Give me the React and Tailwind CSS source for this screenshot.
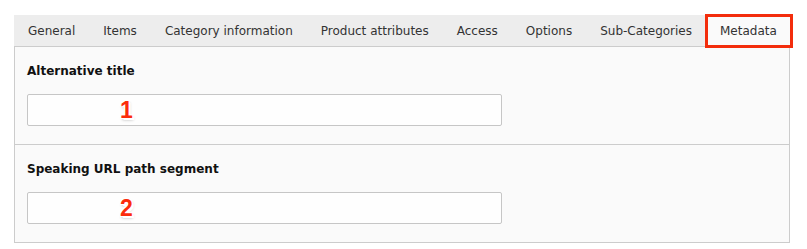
import React from 'react';

const tabs = [
  'General',
  'Items',
  'Category information',
  'Product attributes',
  'Access',
  'Options',
  'Sub-Categories',
];

const badgeShadow = {
  textShadow:
    '1px 0 0 #fff, -1px 0 0 #fff, 0 1px 0 #fff, 0 -1px 0 #fff, 1px 1px 0 #fff, -1px -1px 0 #fff, 1px -1px 0 #fff, -1px 1px 0 #fff, 2px 2px 0 #fff, 1px 2px 3px rgba(0,0,0,0.3)',
};

const Field = ({ label, number, last }) => (
  <div className={`px-[12px] pt-[16px] pb-[18px] ${last ? '' : 'border-b border-[#cccccc]'}`}>
    <div className="text-[12px] leading-[16px] font-bold text-[#111]">{label}</div>
    <div className="relative mt-[15px] w-[475px]">
      <input
        type="text"
        className="block h-[32px] w-full rounded-[2px] border border-[#c6c6c6] bg-[#fefefe] outline-none"
      />
      <span
        className="pointer-events-none absolute left-[93px] top-[4px] font-['Liberation_Sans','Arial',sans-serif] text-[23px] leading-[24px] font-bold text-[#fb2c0c]"
        style={badgeShadow}
      >
        {number}
      </span>
    </div>
  </div>
);

export default function App() {
  return (
    <div className="min-h-[249px] bg-white pl-[14px] pt-[15px] font-['Verdana','DejaVu_Sans',sans-serif]">
      <div className="w-[776px]">
        <div className="flex h-[32px] border-b border-[#cccccc] bg-[#ededed] text-[12px] text-[#333]">
          {tabs.map((t) => (
            <div key={t} className="flex items-center px-[14px] whitespace-nowrap">
              {t}
            </div>
          ))}
          <div className="relative -mb-px flex items-center bg-[#fafafa] px-[14px] whitespace-nowrap">
            Metadata
            <span className="pointer-events-none absolute -top-[1px] -left-[1px] -right-[2px] -bottom-[1px] border-[3px] border-[#f32d0c]" />
          </div>
        </div>
        <div className="border-x border-b border-[#cccccc] bg-[#fafafa]">
          <Field label="Alternative title" number="1" />
          <Field label="Speaking URL path segment" number="2" last />
        </div>
      </div>
    </div>
  );
}
